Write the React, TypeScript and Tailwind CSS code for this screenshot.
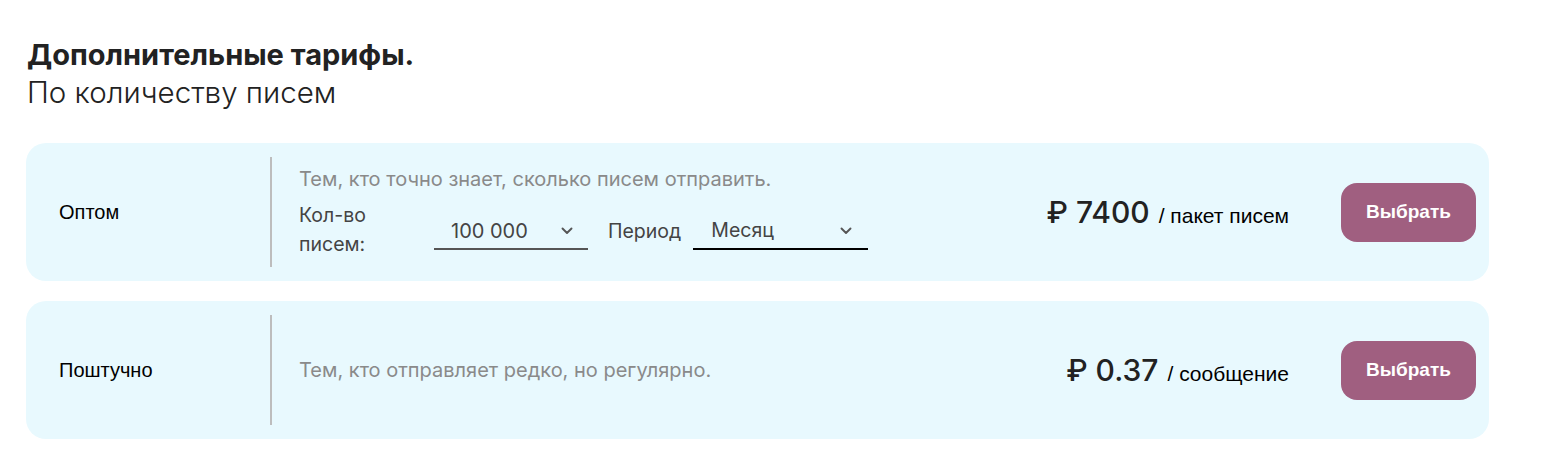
import React from "react";

const Chevron = ({ color = "#555" }: { color?: string }) => (
  <svg width="12" height="8" viewBox="0 0 12 8" fill="none">
    <path d="M1.5 1.5 L6 6 L10.5 1.5" stroke={color} strokeWidth="1.9" strokeLinecap="round" strokeLinejoin="round" />
  </svg>
);

const Button = () => (
  <button className="w-[135px] h-[59px] rounded-[16px] bg-[#a05f80] text-white text-[19px] font-bold [font-family:'Liberation_Sans',Arial,sans-serif]">
    Выбрать
  </button>
);

export default function App() {
  return (
    <div className="w-[1550px] h-[469px] bg-white pt-[37px] pl-[26px] [font-family:Inter,'Noto_Sans',sans-serif]">
      <h1 className="text-[29px] font-bold leading-[36px] text-[#222] pl-[1px]">Дополнительные тарифы.</h1>
      <p className="text-[29.5px] font-light leading-[38px] text-[#222] pl-[1px]">По количеству писем</p>

      <div className="mt-[32px] w-[1463px] flex flex-col gap-[20px]">
        <div className="h-[138px] rounded-[20px] bg-[#e8f9fe] flex items-center pr-[13px]">
          <div className="w-[244px] pl-[33px] text-[20px] text-black [font-family:'Liberation_Sans',Arial,sans-serif]">Оптом</div>
          <div className="w-[2px] h-[110px] bg-[#bdbdbd]" />
          <div className="flex-1 pl-[27px] flex flex-col">
            <div className="text-[20px] text-[#8a8a8a] leading-[26px]">Тем, кто точно знает, сколько писем отправить.</div>
            <div className="flex items-center mt-[9px]">
              <div className="w-[135px] text-[19.5px] leading-[29px] text-[#444]">Кол-во<br />писем:</div>
              <div className="w-[154px] h-[36px] mt-[4px] border-b-2 border-[#555] flex items-center justify-between pl-[17px] pr-[15px]">
                <span className="text-[20px] text-[#444]">100 000</span>
                <Chevron color="#555" />
              </div>
              <span className="ml-[20px] mt-[5px] text-[19.5px] text-[#444]">Период</span>
              <div className="ml-[12px] w-[175px] h-[36px] mt-[4px] border-b-2 border-black flex items-center justify-between pl-[18px] pr-[16px]">
                <span className="text-[19.5px] text-[#444]">Месяц</span>
                <Chevron color="#555" />
              </div>
            </div>
          </div>
          <div className="flex items-baseline text-[#222]">
            <span className="text-[30px] font-medium">₽ 7400</span>
            <span className="ml-[9px] text-[21px] text-black [font-family:'Liberation_Sans',Arial,sans-serif]">/ пакет писем</span>
          </div>
          <div className="ml-[52px]"><Button /></div>
        </div>

        <div className="h-[138px] rounded-[20px] bg-[#e8f9fe] flex items-center pr-[13px]">
          <div className="w-[244px] pl-[33px] text-[20px] text-black [font-family:'Liberation_Sans',Arial,sans-serif]">Поштучно</div>
          <div className="w-[2px] h-[110px] bg-[#bdbdbd]" />
          <div className="flex-1 pl-[27px] text-[20px] text-[#8a8a8a]">Тем, кто отправляет редко, но регулярно.</div>
          <div className="flex items-baseline text-[#222]">
            <span className="text-[30px] font-medium">₽ 0.37</span>
            <span className="ml-[9px] text-[21px] text-black [font-family:'Liberation_Sans',Arial,sans-serif]">/ сообщение</span>
          </div>
          <div className="ml-[52px]"><Button /></div>
        </div>
      </div>
    </div>
  );
}
